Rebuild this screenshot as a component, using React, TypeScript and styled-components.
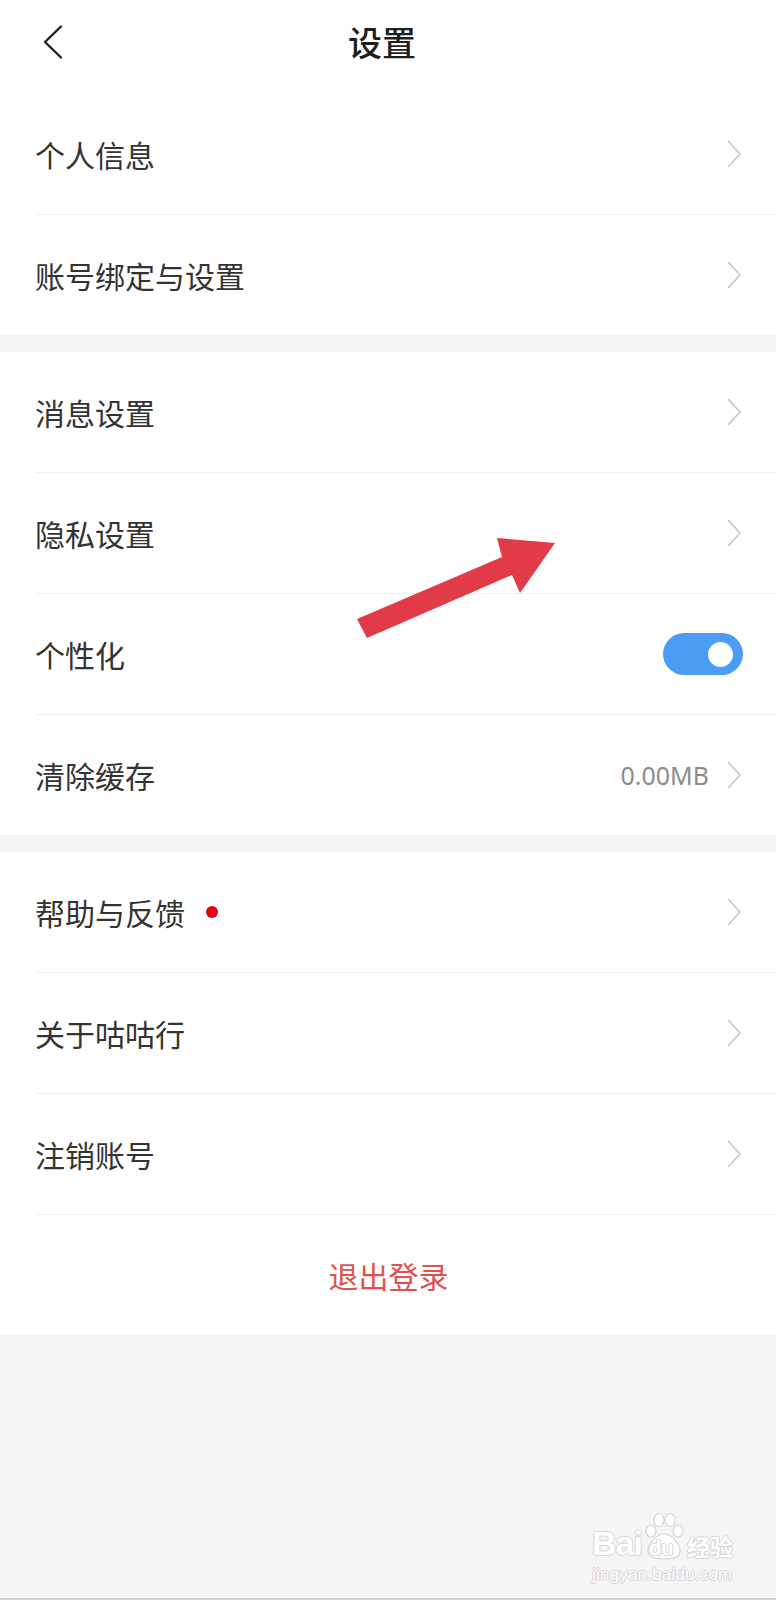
import React from "react";
import styled, { createGlobalStyle } from "styled-components";

const GlobalStyle = createGlobalStyle`
  html, body {
    margin: 0;
    padding: 0;
    background: #f5f5f5;
  }
  * { box-sizing: border-box; }
`;

const FONT = `"Noto Sans CJK SC", "Noto Sans", sans-serif`;

const Page = styled.div`
  position: relative;
  width: 776px;
  height: 1600px;
  background: #f5f5f5;
  border-bottom: 2px solid #cfcfcf;
  font-family: ${FONT};
  overflow: hidden;
`;

const Header = styled.header`
  display: grid;
  grid-template-columns: 1fr auto 1fr;
  align-items: center;
  height: 94px;
  padding: 0 12px 10px 0;
  background: #fff;
`;

const BackButton = styled.button`
  justify-self: start;
  display: flex;
  align-items: center;
  padding: 0;
  margin: 0 0 0 43px;
  border: none;
  background: transparent;
`;

const Title = styled.h1`
  margin: 0;
  font-size: 34px;
  font-weight: 500;
  line-height: 1;
  color: #1e1e1e;
`;

const Section = styled.section<{ $gap?: boolean }>`
  display: flex;
  flex-direction: column;
  background: #fff;
  margin-bottom: ${(p) => (p.$gap ? "17px" : "0")};
`;

const Row = styled.div<{ $center?: boolean }>`
  display: flex;
  align-items: center;
  justify-content: ${(p) => (p.$center ? "center" : "flex-start")};
  height: 120px;
  padding: 0 34px 0 35px;
`;

const Label = styled.span<{ $danger?: boolean }>`
  font-size: 30px;
  line-height: 1;
  color: ${(p) => (p.$danger ? "#e2504e" : "#333333")};
`;

const Dot = styled.span`
  width: 12px;
  height: 12px;
  margin-left: 21px;
  border-radius: 50%;
  background: #e60012;
`;

const Trailing = styled.div`
  margin-left: auto;
  display: flex;
  align-items: center;
  gap: 18px;
`;

const Value = styled.span`
  font-family: "Noto Sans", "Open Sans", sans-serif;
  font-size: 25px;
  line-height: 1;
  color: #8c8c8c;
`;

const Divider = styled.div`
  height: 1px;
  margin-left: 36px;
  background: #efefef;
`;

const Switch = styled.div<{ $on: boolean }>`
  position: relative;
  width: 80px;
  height: 42px;
  border-radius: 21px;
  background: ${(p) => (p.$on ? "#4b9cf4" : "#dcdcdc")};
  margin-right: -1px;
`;

const Knob = styled.span`
  position: absolute;
  top: 8.5px;
  right: 10px;
  width: 25px;
  height: 25px;
  border-radius: 50%;
  background: #fff;
`;

const ArrowOverlay = styled.svg`
  position: absolute;
  left: 0;
  top: 0;
  pointer-events: none;
`;

const Watermark = styled.div`
  position: absolute;
  left: 592px;
  top: 1510px;
  display: flex;
  flex-direction: column;
  align-items: flex-start;
  color: #ffffff;
  text-shadow: 1px 0 0 #d6d6d6, -1px 0 0 #d6d6d6, 0 1px 0 #d6d6d6, 0 -1px 0 #d6d6d6;
  pointer-events: none;
`;

const MarkTop = styled.div`
  display: flex;
  align-items: flex-end;
  height: 50px;
`;

const MarkBai = styled.span`
  font-family: "Liberation Sans", Arial, sans-serif;
  font-weight: 700;
  font-size: 34px;
  line-height: 1;
  letter-spacing: -1px;
`;

const MarkCn = styled.span`
  font-family: "Noto Sans CJK SC", sans-serif;
  font-weight: 700;
  font-size: 23px;
  line-height: 1;
  margin-left: 1px;
  margin-bottom: 2px;
`;

const MarkUrl = styled.span`
  font-family: "Liberation Sans", Arial, sans-serif;
  font-size: 17px;
  line-height: 1;
  margin-top: 6px;
  letter-spacing: 0.2px;
`;

const PawBox = styled.span`
  position: relative;
  display: inline-flex;
  width: 44px;
  height: 48px;
`;

const PawText = styled.span`
  position: absolute;
  left: 7px;
  bottom: 2px;
  font-family: "Liberation Sans", Arial, sans-serif;
  font-weight: 700;
  font-size: 20px;
  line-height: 1;
`;

const ChevronRight = () => (
  <svg width="15" height="28" viewBox="0 0 15 28" fill="none">
    <polyline points="1.5,1.5 13,14 1.5,26.5" stroke="#c6c6c6" strokeWidth="1.6" strokeLinecap="round" strokeLinejoin="round" />
  </svg>
);

const BackIcon = () => (
  <svg width="20" height="34" viewBox="0 0 20 34" fill="none">
    <polyline points="18,1.5 2,17 18,32.5" stroke="#1e1e1e" strokeWidth="2.4" strokeLinecap="round" strokeLinejoin="round" />
  </svg>
);

const Paw = () => (
  <svg width="44" height="48" viewBox="0 0 44 48" fill="#fff" stroke="#d6d6d6" strokeWidth="1.2">
    <ellipse cx="9" cy="19" rx="5" ry="6" />
    <ellipse cx="17" cy="8" rx="5" ry="6.5" />
    <ellipse cx="28" cy="8" rx="5" ry="6.5" />
    <ellipse cx="36" cy="19" rx="5" ry="6" />
    <path d="M22 22 C14 22 6 32 6 39 C6 45 12 47 22 47 C32 47 38 45 38 39 C38 32 30 22 22 22 Z" />
  </svg>
);

type Item = { label: string; dot?: boolean; value?: string; toggle?: boolean };

const sections: Item[][] = [
  [{ label: "个人信息" }, { label: "账号绑定与设置" }],
  [
    { label: "消息设置" },
    { label: "隐私设置" },
    { label: "个性化", toggle: true },
    { label: "清除缓存", value: "0.00MB" },
  ],
  [{ label: "帮助与反馈", dot: true }, { label: "关于咕咕行" }, { label: "注销账号" }],
];

const SettingRow = ({ item }: { item: Item }) => (
  <Row>
    <Label>{item.label}</Label>
    {item.dot && <Dot />}
    <Trailing>
      {item.value && <Value>{item.value}</Value>}
      {item.toggle ? (
        <Switch $on>
          <Knob />
        </Switch>
      ) : (
        <ChevronRight />
      )}
    </Trailing>
  </Row>
);

export default function App() {
  return (
    <>
      <GlobalStyle />
      <Page>
        <Header>
          <BackButton aria-label="返回">
            <BackIcon />
          </BackButton>
          <Title>设置</Title>
          <span />
        </Header>

        {sections.map((items, si) => (
          <Section key={si} $gap={si < sections.length - 1}>
            {items.map((item, i) => (
              <React.Fragment key={item.label}>
                {i > 0 && <Divider />}
                <SettingRow item={item} />
              </React.Fragment>
            ))}
            {si === sections.length - 1 && (
              <>
                <Divider />
                <Row $center>
                  <Label $danger>退出登录</Label>
                </Row>
              </>
            )}
          </Section>
        ))}

        <ArrowOverlay width="776" height="1600" viewBox="0 0 776 1600">
          <polygon
            points="357,619 502,557 497,538 555,543 520,593 512,575 367,638"
            fill="#e13b47"
          />
        </ArrowOverlay>

        <Watermark>
          <MarkTop>
            <MarkBai>Bai</MarkBai>
            <PawBox>
              <Paw />
              <PawText>du</PawText>
            </PawBox>
            <MarkCn>经验</MarkCn>
          </MarkTop>
          <MarkUrl>jingyan.baidu.com</MarkUrl>
        </Watermark>
      </Page>
    </>
  );
}
